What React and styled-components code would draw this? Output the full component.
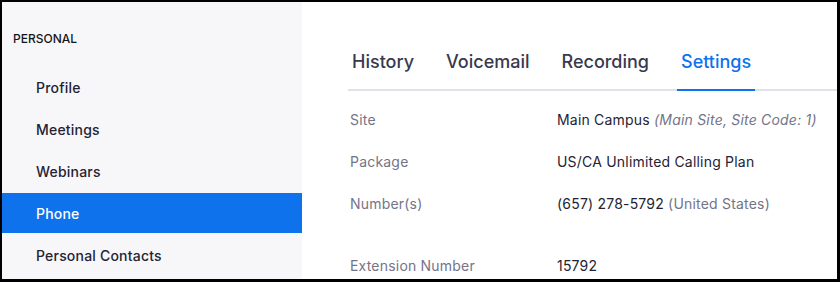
import React from 'react';
import styled, { createGlobalStyle } from 'styled-components';

const GlobalStyle = createGlobalStyle`
  body {
    margin: 0;
    background: #fff;
    font-family: Inter, 'Noto Sans', sans-serif;
  }
`;

const BLUE = '#0e72ed';

const Frame = styled.div`
  width: 840px;
  height: 282px;
  box-sizing: border-box;
  border-style: solid;
  border-color: #000;
  border-width: 2px 3px 3px 2px;
  display: flex;
  overflow: hidden;
`;

const Sidebar = styled.nav`
  width: 300px;
  flex-shrink: 0;
  background: #f7f7f9;
  padding-top: 29px;
`;

const SectionTitle = styled.div`
  font-size: 12px;
  line-height: 16px;
  font-weight: 500;
  color: #131619;
  padding-left: 11px;
  margin-bottom: 20px;
`;

const MenuItem = styled.div`
  height: 40px;
  margin-bottom: 2px;
  padding-left: 34px;
  display: flex;
  align-items: center;
  font-size: 14px;
  font-weight: 500;
  letter-spacing: 0.2px;
  color: ${(p) => (p.active ? '#fff' : '#232333')};
  background: ${(p) => (p.active ? BLUE : 'transparent')};
`;

const Main = styled.main`
  flex: 1;
  padding: 48px 0 0 46px;
  background: #fff;
`;

const Tabs = styled.div`
  display: flex;
  gap: 24px;
  border-bottom: 2px solid #dfe3e8;
`;

const Tab = styled.div`
  padding: 0 4px 15px;
  margin-bottom: -2px;
  font-size: 18px;
  line-height: 24px;
  font-weight: 500;
  color: ${(p) => (p.active ? BLUE : '#39394d')};
  border-bottom: 2px solid ${(p) => (p.active ? BLUE : 'transparent')};
`;

const InfoTable = styled.div`
  margin-top: 8px;
  padding-left: 2px;
`;

const InfoRow = styled.div`
  display: grid;
  grid-template-columns: 207px 1fr;
  height: 42px;
  align-items: center;
  font-size: 14px;
  line-height: 20px;
  letter-spacing: 0.2px;
  margin-bottom: ${(p) => (p.spaced ? '20px' : '0')};
`;

const Label = styled.div`
  color: #747487;
`;

const Value = styled.div`
  color: #232333;
  white-space: nowrap;
`;

const Note = styled.span`
  color: #747487;
  font-style: ${(p) => (p.italic ? 'italic' : 'normal')};
`;

const menu = ['Profile', 'Meetings', 'Webinars', 'Phone', 'Personal Contacts'];
const tabs = ['History', 'Voicemail', 'Recording', 'Settings'];

export default function App() {
  return (
    <>
      <GlobalStyle />
      <Frame>
        <Sidebar>
          <SectionTitle>PERSONAL</SectionTitle>
          {menu.map((m) => (
            <MenuItem key={m} active={m === 'Phone'}>
              {m}
            </MenuItem>
          ))}
        </Sidebar>
        <Main>
          <Tabs>
            {tabs.map((t) => (
              <Tab key={t} active={t === 'Settings'}>
                {t}
              </Tab>
            ))}
          </Tabs>
          <InfoTable>
            <InfoRow>
              <Label>Site</Label>
              <Value>
                Main Campus <Note italic>(Main Site, Site Code: 1)</Note>
              </Value>
            </InfoRow>
            <InfoRow>
              <Label>Package</Label>
              <Value>US/CA Unlimited Calling Plan</Value>
            </InfoRow>
            <InfoRow spaced>
              <Label>Number(s)</Label>
              <Value>
                (657) 278-5792 <Note>(United States)</Note>
              </Value>
            </InfoRow>
            <InfoRow>
              <Label>Extension Number</Label>
              <Value>15792</Value>
            </InfoRow>
          </InfoTable>
        </Main>
      </Frame>
    </>
  );
}
